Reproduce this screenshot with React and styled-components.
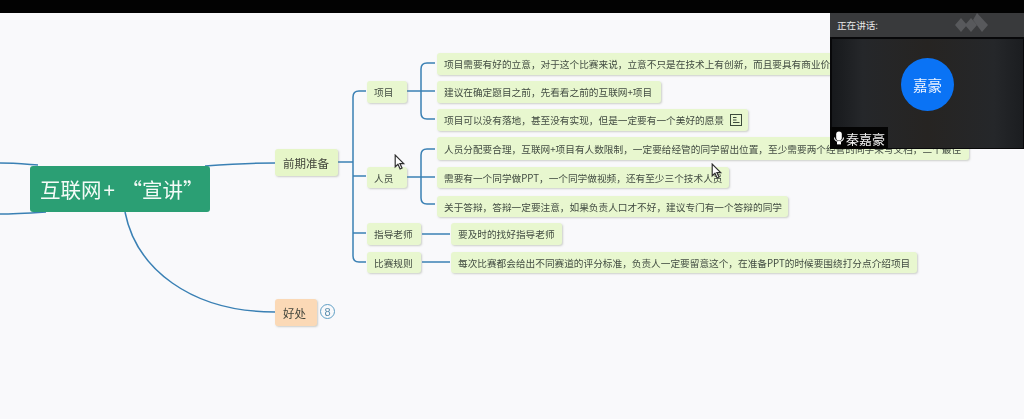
import React from 'react';
import styled, { createGlobalStyle } from 'styled-components';

const GlobalStyle = createGlobalStyle`
  html, body {
    margin: 0;
    padding: 0;
    background: #000;
  }
  body {
    font-family: "Noto Sans CJK SC", "Liberation Sans", sans-serif;
  }
`;

const links = [
  'M0 163 C14 163 24 164 38 165',
  'M0 214 C14 214 30 213 46 212',
  'M205 166 C232 164 250 163 275 163',
  'M125 212 C136 268 190 312 275 312',
  'M338 162 L353 162',
  'M366 91 L359 91 Q353 91 353 97 L353 256 Q353 262 359 262 L366 262',
  'M353 176 L366 176',
  'M353 233 L366 233',
  'M407 91 L435 91',
  'M435 63 L427 63 Q421 63 421 69 L421 113 Q421 119 427 119 L435 119',
  'M407 177 L435 177',
  'M435 149 L427 149 Q421 149 421 155 L421 198 Q421 204 427 204 L435 204',
  'M422 234 L450 234',
  'M422 262 L450 262',
];

const nodes = [
  { x: 367, y: 81, w: 40, h: 22, text: '项目' },
  { x: 367, y: 167, w: 40, h: 21, text: '人员' },
  { x: 367, y: 223, w: 54, h: 22, text: '指导老师' },
  { x: 367, y: 252, w: 54, h: 21, text: '比赛规则' },
  { x: 437, y: 53, w: 412, h: 22, text: '项目需要有好的立意，对于这个比赛来说，立意不只是在技术上有创新，而且要具有商业价值' },
  { x: 437, y: 81, w: 224, h: 22, text: '建议在确定题目之前，先看看之前的互联网+项目' },
  { x: 437, y: 109, w: 311, h: 22, text: '项目可以没有落地，甚至没有实现，但是一定要有一个美好的愿景', note: true },
  { x: 437, y: 137, w: 532, h: 23, text: '人员分配要合理，互联网+项目有人数限制，一定要给经管的同学留出位置，至少需要两个经管的同学来写文档，二个最佳' },
  { x: 437, y: 167, w: 292, h: 21, text: '需要有一个同学做PPT，一个同学做视频，还有至少三个技术人员' },
  { x: 437, y: 196, w: 351, h: 21, text: '关于答辩，答辩一定要注意，如果负责人口才不好，建议专门有一个答辩的同学' },
  { x: 451, y: 223, w: 111, h: 22, text: '要及时的找好指导老师' },
  { x: 451, y: 252, w: 466, h: 21, text: '每次比赛都会给出不同赛道的评分标准，负责人一定要留意这个，在准备PPT的时候要围绕打分点介绍项目' },
];

function NoteIcon() {
  return (
    <svg width="12" height="12" viewBox="0 0 12 12" fill="none" stroke="#3c4a3c" strokeWidth="1">
      <rect x="0.5" y="0.5" width="11" height="11" />
      <path d="M3 3.5H6.5M3 6H6.5M3 8.5H9.5" />
    </svg>
  );
}

function Cursor({ x, y }) {
  return (
    <Pointer $x={x} $y={y} width="12" height="16" viewBox="0 0 11 15">
      <path d="M1 1 L1 12 L3.6 9.6 L5.6 14 L7.4 13.2 L5.4 9 L9 9 Z" fill="#fff" stroke="#2e2e2e" strokeWidth="1.1" />
    </Pointer>
  );
}

function App() {
  return (
    <Page>
      <GlobalStyle />
      <TopBar />
      <Canvas>
        <Links viewBox="0 0 1024 419">
          {links.map((d) => (
            <path key={d} d={d} />
          ))}
        </Links>

        <RootNode>互联网<Plus>+</Plus> “宣讲”</RootNode>
        <MainNode $y={149} $w={63} $fill="#e6f6c8">前期准备</MainNode>
        <MainNode $y={299} $w={42} $fill="#fbd9b6">好处</MainNode>
        <CountBadge>8</CountBadge>

        {nodes.map((n) => (
          <TopicNode key={n.text} $x={n.x} $y={n.y} $w={n.w} $h={n.h}>
            <span>{n.text}</span>
            {n.note && <NoteIcon />}
          </TopicNode>
        ))}

        <Cursor x={394} y={154} />
        <Cursor x={711} y={163} />
      </Canvas>

      <VideoPanel>
        <PanelHeader>
          <span>正在讲话:</span>
          <Watermark width="36" height="20" viewBox="0 0 36 20">
            <path d="M8 5 L14 12 L8 19 L2 12 Z" />
            <path d="M18 5 L24 12 L18 19 L12 12 Z" />
            <path d="M24 0 L35 12 L29 19 L20 7 Z" />
          </Watermark>
        </PanelHeader>
        <PanelBody>
          <Avatar>嘉豪</Avatar>
          <NameTag>
            <svg width="12" height="14" viewBox="0 0 12 14" fill="#fff">
              <rect x="3.2" y="0.5" width="5.6" height="9" rx="2.8" />
              <path d="M1 6.6 C1 9.6 3 11 6 11 C9 11 11 9.6 11 6.6 L10 6.6 C10 9 8.4 10 6 10 C3.6 10 2 9 2 6.6 Z" />
              <rect x="4" y="11" width="4" height="2.4" />
            </svg>
            <span>秦嘉豪</span>
          </NameTag>
        </PanelBody>
      </VideoPanel>
    </Page>
  );
}

export default App;

// Styled Components

const Page = styled.div`
  position: relative;
  width: 1024px;
  height: 419px;
  overflow: hidden;
  display: flex;
  flex-direction: column;
`;

const TopBar = styled.div`
  height: 13px;
  flex-shrink: 0;
  background: #020202;
`;

const Canvas = styled.div`
  flex: 1;
  background: #f9f9fb;
`;

const Links = styled.svg`
  position: absolute;
  inset: 0;
  width: 1024px;
  height: 419px;
  fill: none;
  stroke: #3a80b4;
  stroke-width: 1.5;
  filter: blur(0.3px);
`;

const RootNode = styled.div`
  position: absolute;
  left: 30px;
  top: 166px;
  width: 180px;
  height: 46px;
  box-sizing: border-box;
  padding-left: 10px;
  display: flex;
  align-items: center;
  background: #2b9f74;
  border-radius: 3px;
  color: #f4fbf7;
  font-size: 20.5px;
  white-space: pre;
  filter: blur(0.4px);
`;

const Plus = styled.span`
  padding: 0 2px;
`;

const MainNode = styled.div`
  position: absolute;
  left: 275px;
  top: ${(p) => p.$y}px;
  width: ${(p) => p.$w}px;
  height: 27px;
  box-sizing: border-box;
  padding-left: 8px;
  display: flex;
  align-items: center;
  background: ${(p) => p.$fill};
  border-radius: 3px;
  box-shadow: 1px 1px 2px rgba(120, 125, 110, 0.35);
  color: #43463c;
  font-size: 11.5px;
  white-space: nowrap;
  filter: blur(0.45px);
`;

const TopicNode = styled.div`
  position: absolute;
  left: ${(p) => p.$x}px;
  top: ${(p) => p.$y}px;
  width: ${(p) => p.$w}px;
  height: ${(p) => p.$h}px;
  box-sizing: border-box;
  padding: 0 0 0 7px;
  display: flex;
  align-items: center;
  gap: 6px;
  background: #e8f7cf;
  border-radius: 3px;
  box-shadow: 1px 1px 2px rgba(120, 130, 110, 0.35);
  color: #424c42;
  font-size: 9.66px;
  white-space: nowrap;
  filter: blur(0.45px);
`;

const CountBadge = styled.div`
  position: absolute;
  left: 320px;
  top: 304px;
  width: 15px;
  height: 15px;
  box-sizing: border-box;
  border: 1px solid #5f9fc4;
  border-radius: 50%;
  display: flex;
  align-items: center;
  justify-content: center;
  color: #5a8fae;
  font-size: 11px;
  font-family: "Liberation Sans", sans-serif;
  filter: blur(0.3px);
`;

const Pointer = styled.svg`
  position: absolute;
  left: ${(p) => p.$x}px;
  top: ${(p) => p.$y}px;
`;

const VideoPanel = styled.div`
  position: absolute;
  left: 830px;
  top: 13px;
  width: 194px;
  height: 136px;
  display: flex;
  flex-direction: column;
  background: #08080a;
`;

const PanelHeader = styled.div`
  height: 24px;
  flex-shrink: 0;
  box-sizing: border-box;
  padding-left: 7px;
  display: flex;
  align-items: center;
  background: #393a3c;
  color: #e8e8e8;
  font-size: 9.6px;
`;

const Watermark = styled.svg`
  position: absolute;
  left: 123px;
  top: 0;
  fill: #58595c;
  filter: blur(0.5px);
`;

const PanelBody = styled.div`
  flex: 1;
  margin: 2px 1px 1px 2px;
  padding-bottom: 19px;
  display: flex;
  align-items: center;
  justify-content: center;
  background: linear-gradient(90deg, #17191c 0%, #25272a 16%, #262422 50%, #25272a 85%, #1b1d20 100%);
`;

const Avatar = styled.div`
  width: 53px;
  height: 53px;
  border-radius: 50%;
  background: #0a73f5;
  color: #eef4ff;
  font-size: 14.5px;
  display: flex;
  align-items: center;
  justify-content: center;
  filter: blur(0.3px);
`;

const NameTag = styled.div`
  position: absolute;
  left: 0;
  bottom: 0;
  height: 22px;
  width: 58px;
  box-sizing: border-box;
  padding-left: 3px;
  display: flex;
  align-items: center;
  gap: 1px;
  background: #040404;
  color: #f2f2f2;
  font-size: 13px;
  white-space: nowrap;
  filter: blur(0.25px);
`;
